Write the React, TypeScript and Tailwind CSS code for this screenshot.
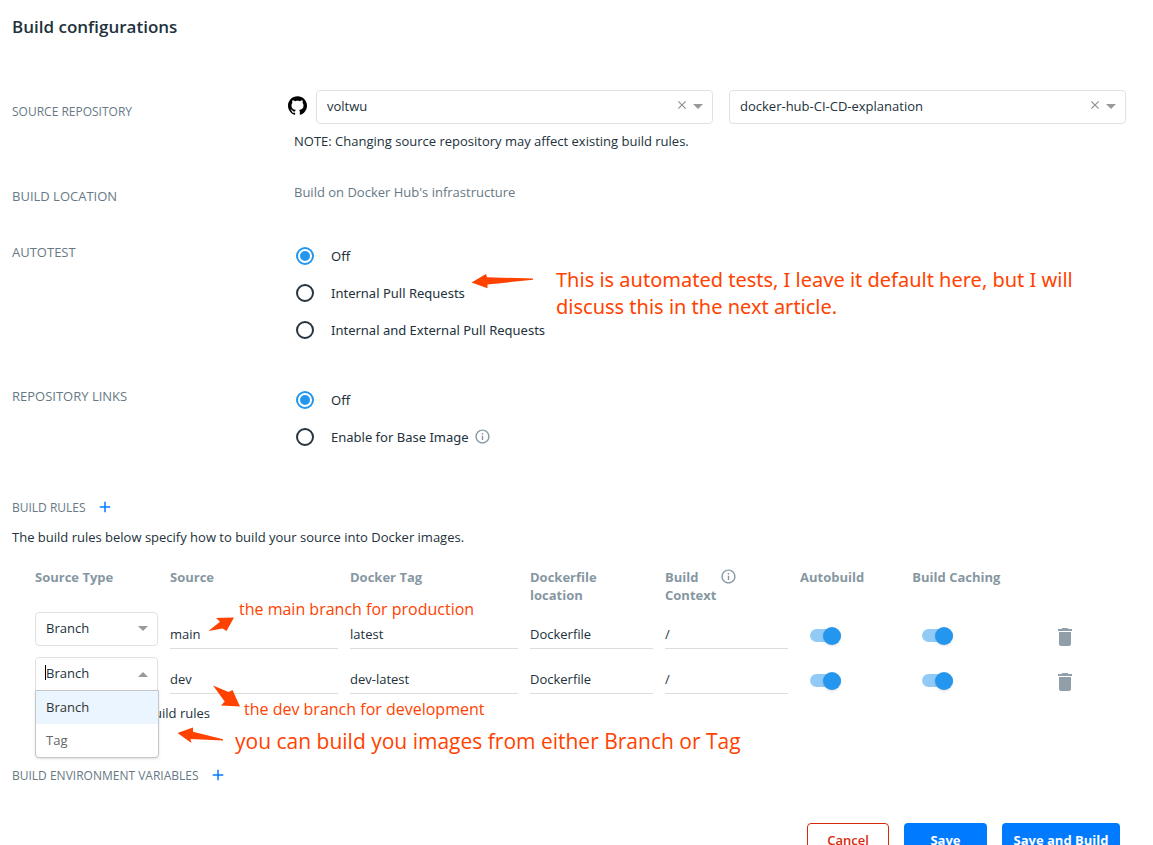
import React from "react";
import { MdAdd, MdArrowDropDown, MdArrowDropUp, MdClose, MdDelete, MdInfoOutline } from "react-icons/md";
import { SiGithub } from "react-icons/si";

const heading = "leading-5 uppercase text-[#677985]";

function RepoSelect({ label, value }: { label: string; value: string }) {
  return (
    <div className="relative min-w-0 flex-1">
      <select
        aria-label={label}
        className="block h-[34px] w-full appearance-none rounded border border-[#dfe2e5] bg-white pr-12 pl-[10px] text-[13px] text-[#22313b]"
      >
        <option>{value}</option>
      </select>
      <button aria-label={`Clear ${label}`} className="absolute top-2 right-6 text-[#8f8f8f]">
        <MdClose size={14} />
      </button>
      <MdArrowDropDown size={24} className="pointer-events-none absolute top-1 right-[3px] text-[#999]" />
    </div>
  );
}

function Radio({ name, label, checked, info }: { name: string; label: string; checked?: boolean; info?: boolean }) {
  return (
    <label className="flex h-[37px] items-center font-['Noto_Sans','Open_Sans',sans-serif] text-[13px] leading-5 text-[#22313b]">
      <input
        type="radio"
        name={name}
        defaultChecked={checked}
        className="mr-[17px] ml-0.5 flex size-[18px] appearance-none items-center justify-center rounded-full border-2 border-[#27343e] before:hidden before:size-2.5 before:rounded-full before:bg-[#2496ed] checked:border-[#2496ed] checked:before:block"
      />
      {label}
      {info && <MdInfoOutline size={17} className="ml-[5px] text-[#8797a2]" />}
    </label>
  );
}

function Section({ title, style, children }: { title: string; style: string; children: React.ReactNode }) {
  return (
    <section className="grid grid-cols-[282px_1fr]">
      <h2 className={`${heading} ${style}`}>{title}</h2>
      <div>{children}</div>
    </section>
  );
}

function AddHeading({ title }: { title: string }) {
  return (
    <div className="flex h-5 items-center gap-[10px]">
      <h2 className={`${heading} pt-0.5 text-xs leading-5`}>{title}</h2>
      <button aria-label={`Add ${title}`} className="text-[#007bff]">
        <MdAdd size={18} />
      </button>
    </div>
  );
}

function Field({ label, value }: { label: string; value: string }) {
  return (
    <input
      aria-label={label}
      defaultValue={value}
      className="block h-[37px] w-full border-b border-[#dcdcdc] pt-2 text-[13px] text-[#22313b] outline-none"
    />
  );
}

function Toggle({ label }: { label: string }) {
  return (
    <input
      type="checkbox"
      role="switch"
      aria-label={label}
      defaultChecked
      className="mt-[17px] ml-[10px] flex h-[13px] w-[31px] appearance-none items-center justify-end rounded-full bg-[#92caf6] before:size-[18px] before:shrink-0 before:rounded-full before:bg-[#2496ed] before:shadow"
    />
  );
}

function OpenTypeSelect() {
  return (
    <div className="relative">
      <input
        role="combobox"
        aria-label="Source type"
        aria-expanded="true"
        aria-controls="type-options"
        defaultValue="Branch"
        className="block h-[34px] w-full rounded-t border border-[#dfe2e5] pr-6 pb-0.5 pl-[10px] text-[13px] text-[#22313b] outline-none"
      />
      <span className="absolute top-2 left-[10px] h-[15px] w-px bg-black" />
      <MdArrowDropUp size={24} className="pointer-events-none absolute top-[6px] right-[3px] text-[#999]" />
      <ul
        id="type-options"
        role="listbox"
        className="absolute top-[33px] left-0 z-10 w-[124px] rounded-b border border-[#c4c6c8] bg-white text-[13px] leading-[33px] shadow-sm"
      >
        <li role="option" aria-selected="true" className="bg-[#ebf5ff] px-[10px] text-[#333]">
          Branch
        </li>
        <li role="option" aria-selected="false" className="px-[10px] text-[#666]">
          Tag
        </li>
      </ul>
    </div>
  );
}

function TypeSelect() {
  return (
    <div className="relative">
      <select
        aria-label="Source type"
        className="block h-[34px] w-full appearance-none rounded border border-[#dfe2e5] bg-white pr-6 pl-[10px] text-[13px] text-[#22313b]"
      >
        <option>Branch</option>
        <option>Tag</option>
      </select>
      <MdArrowDropDown size={24} className="pointer-events-none absolute top-1 right-[3px] text-[#999]" />
    </div>
  );
}

const rules = [
  { source: "main", tag: "latest", open: false },
  { source: "dev", tag: "dev-latest", open: true },
];

const note = "absolute whitespace-nowrap text-[#ff4200]";

function Annotations() {
  return (
    <div className="pointer-events-none absolute inset-0 z-20">
      <svg className="absolute top-0 left-0" width="600" height="800" fill="#ff4200">
        <path d="M471.500 282.500 486 274 487 277.300 533 278.500V279.700L487.500 284.500V288.300Z" />
        <path d="M208.500 631 220 621.700 216 618 234 617.500 226.500 631 222.500 628.500 Z" />
        <path d="M213 685.500 228.500 692 232.500 690 240 706.500 221 705.500 224.700 701.500Z" />
        <path d="M177.500 733 193 727.500V731.700L223 739.300V740.500L190.500 739 191.500 743Z" />
      </svg>
      <p className={`${note} top-[266px] left-[556px] font-['Noto_Sans','Open_Sans',sans-serif] text-xl leading-[27px]`}>
        This is automated tests, I leave it default here, but I will
        <br />
        discuss this in the next article.
      </p>
      <p className={`${note} top-[599px] left-[239px] text-base leading-5`}>the main branch for production</p>
      <p className={`${note} top-[699px] left-[244px] text-base leading-5`}>the dev branch for development</p>
      <p className={`${note} top-[728px] left-[235px] text-[21px] leading-[27px]`}>
        you can build you images from either Branch or Tag
      </p>
    </div>
  );
}

export default function App() {
  return (
    <main className="relative h-screen overflow-hidden bg-white pl-3 font-['Open_Sans',sans-serif] text-[13px] text-[#22313b]">
      <h1 className="pt-[15px] text-[17px] leading-6 font-semibold">Build configurations</h1>

      <div className="mt-[51px] flex flex-col gap-[31px] pr-[27px]">
        <Section title="Source Repository" style="pt-3 text-xs leading-5">
          <div className="-ml-[6px] flex items-center">
            <SiGithub size={19} className="mr-[9px] mb-1 shrink-0 text-black" />
            <div className="flex flex-1 gap-4">
              <RepoSelect label="organization" value="voltwu" />
              <RepoSelect label="repository" value="docker-hub-CI-CD-explanation" />
            </div>
          </div>
          <p className="mt-[7px] leading-5">NOTE: Changing source repository may affect existing build rules.</p>
        </Section>

        <Section title="Build Location" style="pt-1">
          <p className="leading-5 text-[#677985]">Build on Docker Hub's infrastructure</p>
        </Section>

        <Section title="Autotest" style="pt-[5px]">
          <div className="pb-0.5">
            <Radio name="autotest" label="Off" checked />
            <Radio name="autotest" label="Internal Pull Requests" />
            <Radio name="autotest" label="Internal and External Pull Requests" />
          </div>
        </Section>

        <Section title="Repository Links" style="pt-[5px]">
          <div className="pb-0.5">
            <Radio name="links" label="Off" checked />
            <Radio name="links" label="Enable for Base Image" info />
          </div>
        </Section>
      </div>

      <div className="mt-10">
        <AddHeading title="Build Rules" />
        <p className="mt-[10px] leading-5">The build rules below specify how to build your source into Docker images.</p>
      </div>

      <div className="mt-[21px] pr-[46px] pl-[15px]">
        <table className="w-full table-fixed text-left">
          <colgroup>
            <col className="w-[12.5%]" />
            <col className="w-1/6" />
            <col className="w-1/6" />
            <col className="w-[12.5%]" />
            <col className="w-[12.5%]" />
            <col className="w-[10.4%]" />
            <col className="w-[10.4%]" />
            <col />
          </colgroup>
          <thead>
            <tr className="h-11 align-top leading-[18px] text-[#8697a2] [&>th]:pr-1 [&>th]:pl-2 [&>th]:font-bold">
              <th>Source Type</th>
              <th>Source</th>
              <th>Docker Tag</th>
              <th>
                Dockerfile
                <br />
                location
              </th>
              <th>
                <div className="flex gap-1">
                  <span>
                    Build
                    <br />
                    Context
                  </span>
                  <MdInfoOutline size={17} />
                </div>
              </th>
              <th>Autobuild</th>
              <th className="whitespace-nowrap">Build Caching</th>
              <th aria-label="Actions" />
            </tr>
          </thead>
          <tbody>
            {rules.map((r) => (
              <tr key={r.source} className="h-[45px] align-top [&>td]:pr-1 [&>td]:pl-2">
                <td>{r.open ? <OpenTypeSelect /> : <TypeSelect />}</td>
                <td>
                  <Field label="Source" value={r.source} />
                </td>
                <td>
                  <Field label="Docker tag" value={r.tag} />
                </td>
                <td>
                  <Field label="Dockerfile location" value="Dockerfile" />
                </td>
                <td>
                  <Field label="Build context" value="/" />
                </td>
                <td>
                  <Toggle label="Autobuild" />
                </td>
                <td>
                  <Toggle label="Build caching" />
                </td>
                <td>
                  <button aria-label="Delete rule" className="mt-[13px] ml-7 block text-[#8f9ea8]">
                    <MdDelete size={24} />
                  </button>
                </td>
              </tr>
            ))}
          </tbody>
        </table>
      </div>

      <a href="#examples" className="mt-px ml-[47px] block w-fit leading-5">
        View example build rules
      </a>

      <div className="mt-[42px]">
        <AddHeading title="Build Environment Variables" />
      </div>

      <div className="mt-[38px] flex justify-end gap-[15px] pr-[33px] font-bold">
        <button className="h-9 w-[82px] rounded-sm border border-[#d9290b] font-semibold text-[#d9290b]">Cancel</button>
        <button className="h-9 w-[83px] rounded-sm bg-[#007bff] text-white">Save</button>
        <button className="h-9 w-[118px] rounded-sm bg-[#007bff] text-white">Save and Build</button>
      </div>

      <Annotations />
    </main>
  );
}
